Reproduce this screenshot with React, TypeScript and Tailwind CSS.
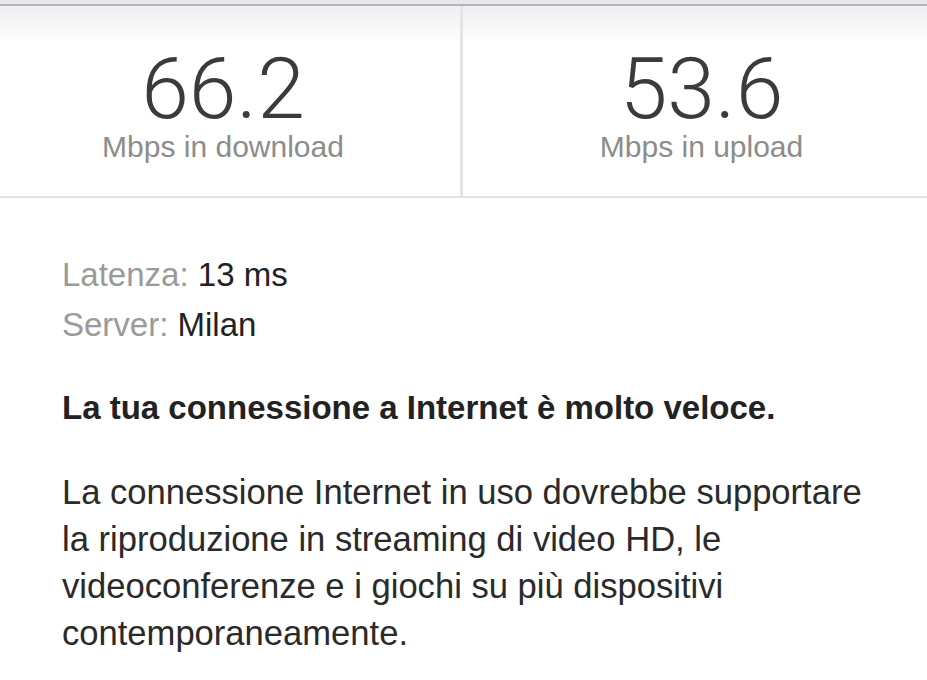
import React from 'react';

const font = { fontFamily: '"Liberation Sans", Arial, sans-serif' };
const thin = { fontFamily: 'Roboto, "Liberation Sans", Arial, sans-serif' };

export default function App() {
  return (
    <div className="w-[927px] h-[680px] overflow-hidden bg-white" style={font}>
      {/* Top bar */}
      <div className="h-[4px] bg-[#e8e8ea]" />
      <div className="h-[2px] bg-[#b4b4b8]" />

      {/* Speed results */}
      <div className="-ml-[14px] w-[954px] grid grid-cols-2 border-b-2 border-[#e2e2e2] bg-linear-to-b from-[#efeff1] to-white to-[20%]">
        <div className="flex flex-col items-center pt-[45px] pb-[34px] border-r-[3px] border-[#e4e4e6]">
          <div className="text-[86px] leading-[76px] font-light text-[#3b3b3b]" style={thin}>66.2</div>
          <div className="mt-[5px] text-[30px] leading-[30px] text-[#8c8c8c]">Mbps in download</div>
        </div>
        <div className="flex flex-col items-center pt-[45px] pb-[34px]">
          <div className="text-[86px] leading-[76px] font-light text-[#3b3b3b]" style={thin}>53.6</div>
          <div className="mt-[5px] text-[30px] leading-[30px] text-[#8c8c8c]">Mbps in upload</div>
        </div>
      </div>

      {/* Details */}
      <div className="pl-[62px] pr-[40px] pt-[52px]">
        <div className="text-[33px] leading-[50px]">
          <div>
            <span className="text-[#9a9a9a]">Latenza:</span>{' '}
            <span className="text-[#222]">13 ms</span>
          </div>
          <div>
            <span className="text-[#9a9a9a]">Server:</span>{' '}
            <span className="text-[#222]">Milan</span>
          </div>
        </div>
        <p className="mt-[34px] text-[33px] leading-[47px] font-bold text-[#222]">
          La tua connessione a Internet è molto veloce.
        </p>
        <p className="mt-[38px] text-[34.6px] leading-[47px] text-[#2a2a2a] max-w-[815px]">
          La connessione Internet in uso dovrebbe supportare la riproduzione in streaming di video HD, le
          videoconferenze e i giochi su più dispositivi contemporaneamente.
        </p>
      </div>
    </div>
  );
}
